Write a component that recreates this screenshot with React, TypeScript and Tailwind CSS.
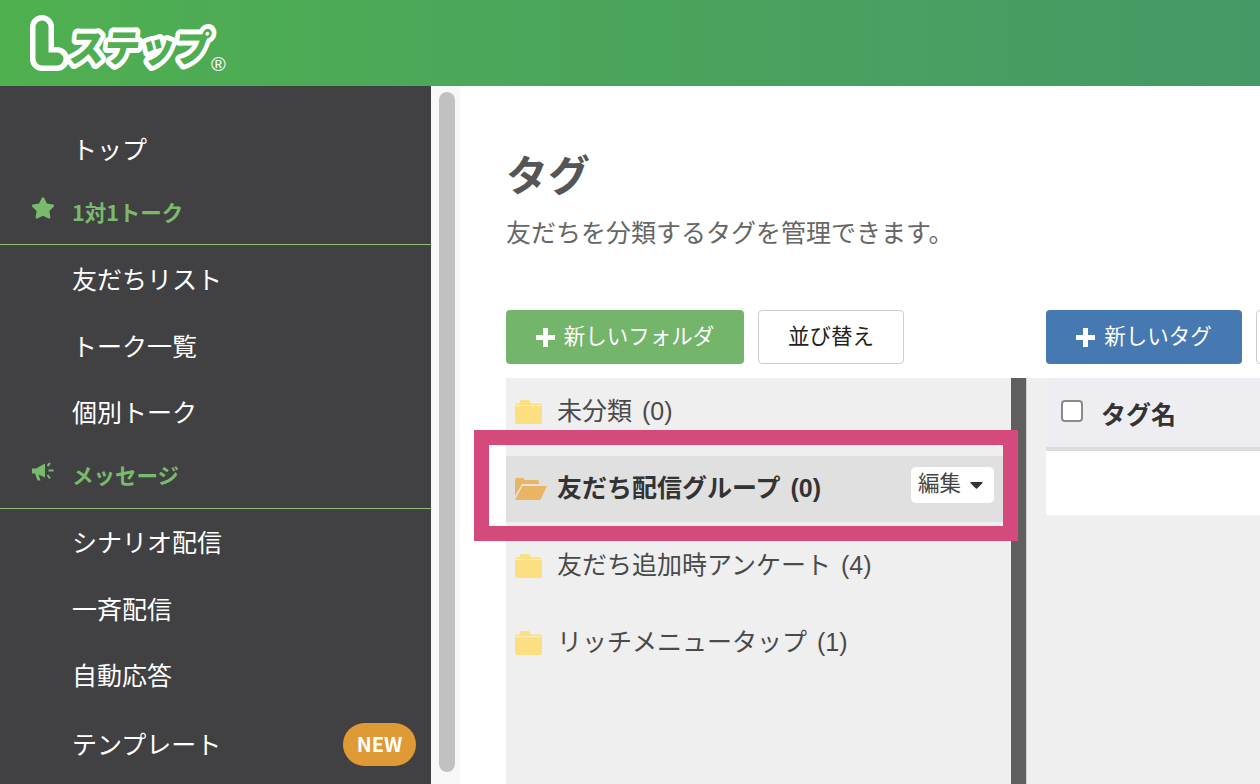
import React from "react";
import { FaStar, FaCaretDown } from "react-icons/fa";

const Item = ({ label, cls = "h-[66px]", badge }: { label: string; cls?: string; badge?: boolean }) => (
  <div className={`flex items-center justify-between pl-[72px] pr-[15px] text-[25px] text-white ${cls}`}>
    <span>{label}</span>
    {badge && (
      <span className="flex h-[43px] w-[73px] items-center justify-center rounded-full bg-[#e09a35] text-[20px] font-bold">NEW</span>
    )}
  </div>
);

const Section = ({ icon, label, cls }: { icon: React.ReactNode; label: string; cls: string }) => (
  <div className={`flex items-center border-b border-[#8dbf7f] pb-[2px] text-[21.5px] font-bold text-[#78bb6c] ${cls}`}>
    <span className="flex w-[72px] justify-center pl-[14px] pr-[1px]">{icon}</span>
    <span>{label}</span>
  </div>
);

const Horn = () => (
  <svg width="22" height="20" viewBox="0 0 22 20" className="mb-[8px]" fill="#78bb6c">
    <path d="M0 6.5 4 6.5 13 1.5V15.5L6.5 12.5 8.5 18.5H5.5L3 11.5H0z" />
    <path d="M15.5 4 18 1M16.5 8.5H21.5M15.5 13 18 16.5" stroke="#78bb6c" strokeWidth="2" fill="none" />
  </svg>
);

const Plus = () => (
  <svg width="19" height="19" viewBox="0 0 19 19" fill="#fff" className="shrink-0">
    <path d="M7 0h5v7h7v5h-7v7H7v-7H0V7h7z" />
  </svg>
);

const Folder = ({ open }: { open?: boolean }) =>
  open ? (
    <svg width="32" height="24" viewBox="0 0 32 24" className="mr-[10px] shrink-0">
      <path d="M0 3a2 2 0 0 1 2-2h6l2 2h12a2 2 0 0 1 2 2v2H7L0 19z" fill="#e9b463" />
      <path d="M7.5 9H32l-6.5 14H0z" fill="#e9b463" />
    </svg>
  ) : (
    <svg width="27" height="24" viewBox="0 0 27 24" className="mr-[15px] shrink-0">
      <path d="M0 5h27v17a2 2 0 0 1-2 2H2a2 2 0 0 1-2-2z" fill="#fbdf80" />
      <path d="M0 5a1.500 1.500 0 0 1 1.500-1.500H4L6 0h8l2 3.500h9.500A1.500 1.500 0 0 1 27 5z" fill="#fbdf80" />
      <rect x="0" y="5" width="27" height="1" fill="#fdeeb8" />
    </svg>
  );

const Row = ({ label, active }: { label: string; active?: boolean }) => (
  <div className={`flex h-[66px] items-center pl-[9px] pr-[17px] text-[25px] [word-spacing:3px] ${active ? "bg-[#e0e0e0] font-bold text-[#333]" : "text-[#4a4a4a]"}`}>
    <Folder open={active} />
    <span className="flex-1">{label}</span>
    {active && (
      <span className="mb-[9px] flex h-[36px] w-[83px] items-center justify-center gap-[5px] rounded-[5px] bg-white text-[21.5px] font-normal text-[#444]">
        編集
        <FaCaretDown className="text-[21px] text-[#333]" />
      </span>
    )}
  </div>
);

export default function App() {
  return (
    <div
      className="relative h-[784px] w-[1260px] overflow-hidden bg-white"
      style={{ fontFamily: '"Liberation Sans","Noto Sans CJK JP",sans-serif' }}
    >
      <header className="flex h-[86px] items-start bg-gradient-to-r from-[#4fb04f] to-[#459966]">
        <svg width="240" height="86" viewBox="0 0 240 86">
          <path d="M42 27V59H57" fill="none" stroke="#fff" strokeWidth="24" strokeLinecap="round" strokeLinejoin="round" />
          <path d="M42 27V59H57" fill="none" stroke="#4fae50" strokeWidth="13" strokeLinecap="round" strokeLinejoin="round" />
          <g transform="translate(68 62) skewX(-6) scale(0.93 1)">
            <text
              x="0"
              y="0"
              fontSize="38"
              fontWeight="900"
              fill="#4fae50"
              stroke="#fff"
              strokeWidth="10"
              strokeLinejoin="round"
              paintOrder="stroke"
              fontFamily="Noto Sans CJK JP"
            >
              ステップ
            </text>
          </g>
          <text x="211" y="71" fontSize="20" fill="#fff" fontFamily="Liberation Sans">®</text>
        </svg>
      </header>
      <div className="flex h-[698px]">
        <aside
          className="h-full w-[431px] shrink-0 bg-[#414042] pt-[30px]"
          style={{ fontFamily: '"Noto Sans CJK JP",sans-serif' }}
        >
          <Item label="トップ" />
          <Section cls="h-[63px]" icon={<FaStar className="mb-[8px] text-[24px]" />} label="1対1トーク" />
          <Item label="友だちリスト" cls="h-[68px]" />
          <Item label="トーク一覧" />
          <Item label="個別トーク" />
          <Section cls="h-[64px]" icon={<Horn />} label="メッセージ" />
          <Item label="シナリオ配信" />
          <Item label="一斉配信" cls="h-[67px]" />
          <Item label="自動応答" cls="h-[65px]" />
          <Item label="テンプレート" cls="h-[74px]" badge />
        </aside>
        <div className="h-full w-[29px] shrink-0 bg-[#f8f8f8] pl-[8px] pt-[6px]">
          <div className="h-[680px] w-[16px] rounded-full bg-[#c1c1c1]" />
        </div>
        <main className="flex-1 overflow-hidden pl-[46px] text-[#555]">
          <h1 className="mt-[60px] h-[62px] text-[42px] font-bold leading-[62px] text-[#555]">タグ</h1>
          <p className="mt-[7px] h-[36px] text-[25px] leading-[36px] text-[#666]">友だちを分類するタグを管理できます。</p>
          <div className="mt-[59px] flex h-[54px]">
            <div className="flex w-[398px] gap-[14px]">
              <button className="flex h-[54px] w-[238px] items-center justify-center gap-[9px] rounded-[4px] bg-[#73b56b] pt-[1px] text-[21.5px] text-white">
                <Plus />
                新しいフォルダ
              </button>
              <button className="h-[54px] w-[146px] rounded-[4px] border border-[#cccccc] bg-white pt-[1px] text-[21.5px] text-[#222]">並び替え</button>
            </div>
            <div className="ml-[142px] flex gap-[14px]">
              <button className="flex h-[54px] w-[196px] shrink-0 items-center justify-center gap-[9px] rounded-[4px] bg-[#4678b2] pt-[1px] text-[21.5px] text-white">
                <Plus />
                新しいタグ
              </button>
              <div className="h-[54px] w-[146px] shrink-0 rounded-[4px] border border-[#cccccc] bg-white" />
            </div>
          </div>
          <div className="mt-[14px] flex h-[406px]">
            <div className="flex w-[505px] shrink-0 flex-col gap-[11px] bg-[#efefef] pt-[1px]">
              <Row label="未分類 (0)" />
              <Row label="友だち配信グループ (0)" active />
              <Row label="友だち追加時アンケート (4)" />
              <Row label="リッチメニュータップ (1)" />
            </div>
            <div className="w-[16px] shrink-0 border-r border-[#cfcfcf] bg-[#5f5f5f]" />
            <div className="w-[300px] shrink-0 bg-[#efefef] pl-[19px]">
              <div className="flex h-[73px] items-start border-b-[4px] border-[#dddddd] bg-[#eeeef2] pl-[15px] pt-[22px]">
                <span className="h-[22px] w-[22px] rounded-[4px] border-2 border-[#8a8a8a] bg-white" />
                <span className="ml-[18px] text-[25px] font-bold leading-[30px] text-[#333]">タグ名</span>
              </div>
              <div className="h-[64px] bg-white" />
            </div>
          </div>
        </main>
      </div>
      <div className="absolute left-[474px] top-[430px] h-[111px] w-[544px] border-[15px] border-[#d44a7c]" />
    </div>
  );
}
